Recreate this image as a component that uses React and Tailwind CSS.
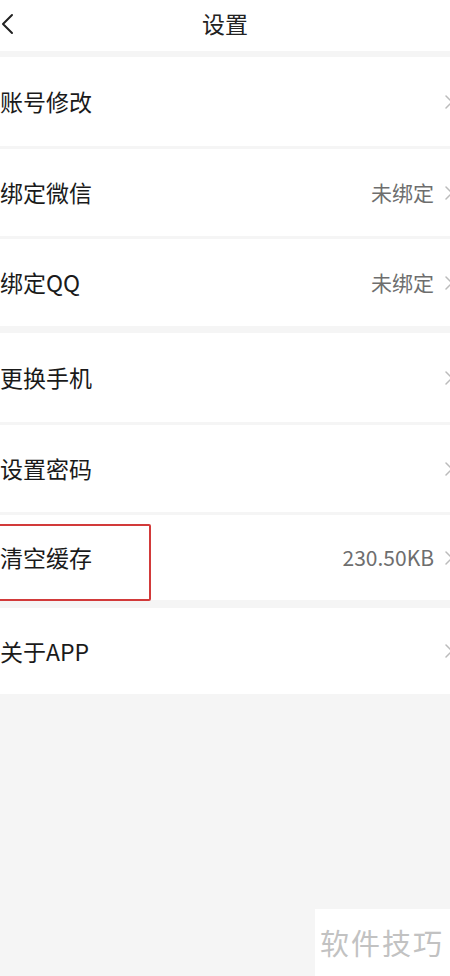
import React from "react";

const font = { fontFamily: '"Noto Sans CJK SC", "Noto Sans", sans-serif' };

const Chevron = () => (
  <svg className="shrink-0" width="10" height="16" viewBox="0 0 10 16" fill="none">
    <path d="M2 2l6 6-6 6" stroke="#bbbbbb" strokeWidth="1.5" strokeLinecap="round" strokeLinejoin="round" />
  </svg>
);

const Row = ({ label, value, height = "h-[87px]", children }) => (
  <div className={`relative flex items-center justify-between bg-white ${height}`}>
    <span className="text-[23px] text-[#1a1a1a] leading-none">{label}</span>
    <div className="flex items-center gap-[10px] -mr-[4px]">
      {value && <span className="text-[21px] text-[#6e6e6e] leading-none">{value}</span>}
      <Chevron />
    </div>
    {children}
  </div>
);

const App = () => {
  return (
    <div className="relative w-[450px] h-[976px] overflow-hidden bg-[#f5f5f5]" style={font}>
      {/* 顶部导航 */}
      <div className="relative flex items-center justify-center h-[51px] pb-[5px] bg-white">
        <svg className="absolute left-[1px] top-[13px]" width="14" height="22" viewBox="0 0 14 22" fill="none">
          <path d="M11 2L2 11l9 9" stroke="#222" strokeWidth="2" strokeLinecap="round" strokeLinejoin="round" />
        </svg>
        <span className="text-[23px] text-[#222] leading-none">设置</span>
      </div>

      <div className="mt-[6px] flex flex-col">
        <Row label="账号修改" height="h-[89px]" />
        <div className="h-[3px]" />
        <Row label="绑定微信" value="未绑定" />
        <div className="h-[3px]" />
        <Row label="绑定QQ" value="未绑定" />

        <div className="h-[7px]" />
        <Row label="更换手机" height="h-[89px]" />
        <div className="h-[3px]" />
        <Row label="设置密码" />
        <div className="h-[3px]" />
        <Row label="清空缓存" value="230.50KB" height="h-[85px]">
          {/* 红框标注 */}
          <div className="absolute left-[-10px] top-[9px] w-[161px] h-[77px] border-2 border-[#d23a3a] rounded-[2px] pointer-events-none" />
        </Row>

        <div className="h-[8px]" />
        <Row label="关于APP" height="h-[86px]" />
      </div>

      {/* 水印 */}
      <div className="absolute left-[315px] top-[909px] w-[135px] h-[67px] bg-white flex items-center pl-[5px]">
        <span className="text-[29px] text-[#c2c2c2] leading-none tracking-[2px]">软件技巧</span>
      </div>
    </div>
  );
};

export default App;
